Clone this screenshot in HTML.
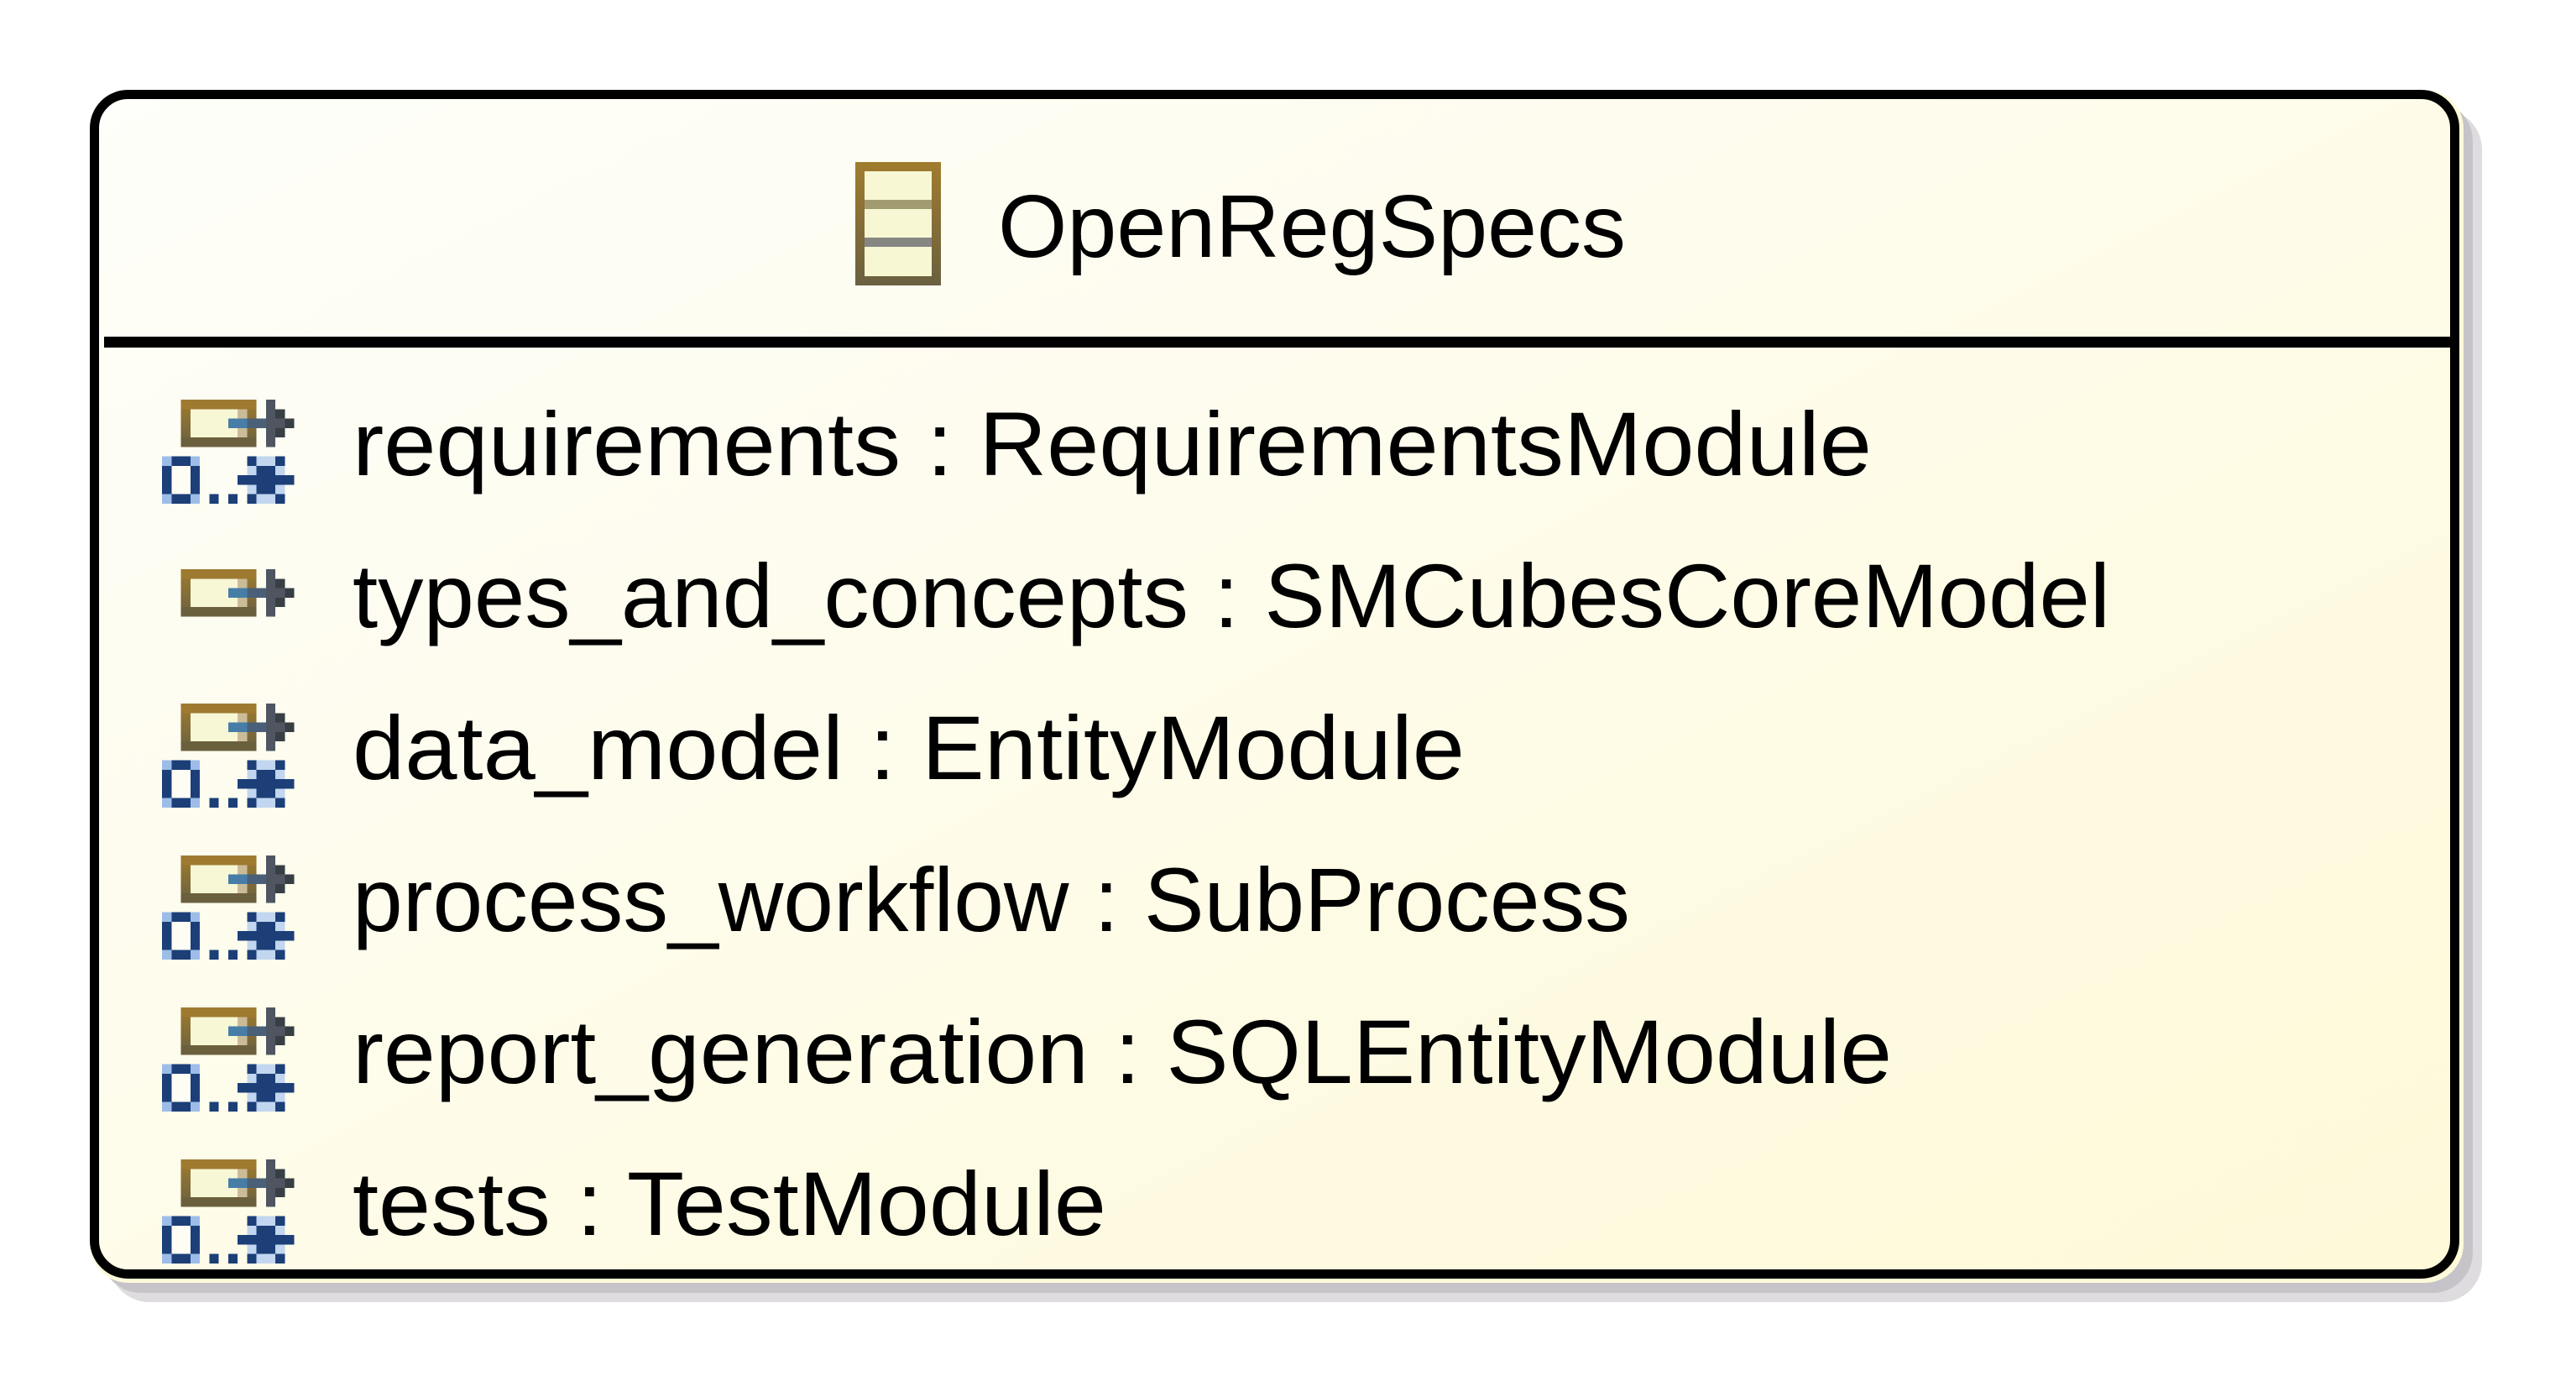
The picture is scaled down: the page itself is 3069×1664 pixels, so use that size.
<!DOCTYPE html>
<html><head><meta charset="utf-8"><style>html,body{margin:0;padding:0;background:#fff}svg{display:block}</style></head>
<body>
<svg width="3069" height="1664" viewBox="0 0 3069 1664" xmlns="http://www.w3.org/2000/svg">
<defs>
<linearGradient id="bg" x1="0" y1="0" x2="1" y2="1">
<stop offset="0" stop-color="#fefefa"/><stop offset="1" stop-color="#fef9d8"/>
</linearGradient>
<linearGradient id="gold" x1="0" y1="0" x2="0" y2="1">
<stop offset="0" stop-color="#a07c2e"/><stop offset="1" stop-color="#6a6040"/>
</linearGradient>
<g id="attr" shape-rendering="crispEdges">
<rect x="2" y="0" width="8" height="5" fill="url(#gold)"/>
<rect x="2" y="0" width="8" height="1" fill="#9e7a30"/>
<rect x="2" y="4" width="8" height="1" fill="#6b603e"/>
<rect x="3" y="1" width="6" height="3" fill="#f7f7d6"/>
<rect x="8" y="1" width="1" height="3" fill="#cbbc98"/>
<rect x="7" y="2" width="2" height="1" fill="#467ea8"/>
<rect x="9" y="2" width="2" height="1" fill="#4a6078"/>
<rect x="11" y="0" width="1" height="5" fill="#4f5561"/>
<rect x="12" y="1" width="1" height="3" fill="#373f44"/>
<rect x="12" y="2" width="1" height="1" fill="#4f5561"/>
<rect x="13" y="2" width="1" height="1" fill="#373f44"/>
</g>
<g id="mult" shape-rendering="crispEdges">
<rect x="0" y="6" width="4" height="5" fill="#1c3f78"/>
<rect x="1" y="7" width="2" height="3" fill="#fdfdf5"/>
<rect x="0" y="6" width="1" height="1" fill="#9dbde8"/><rect x="3" y="6" width="1" height="1" fill="#9dbde8"/>
<rect x="0" y="10" width="1" height="1" fill="#9dbde8"/><rect x="3" y="10" width="1" height="1" fill="#9dbde8"/>
<rect x="5" y="10" width="1" height="1" fill="#1c3f78"/><rect x="7" y="10" width="1" height="1" fill="#1c3f78"/>
<rect x="9" y="6" width="4" height="5" fill="#c2d6f0"/>
<rect x="9" y="6" width="1" height="1" fill="#1c3f78"/><rect x="12" y="6" width="1" height="1" fill="#1c3f78"/>
<rect x="9" y="10" width="1" height="1" fill="#1c3f78"/><rect x="12" y="10" width="1" height="1" fill="#1c3f78"/>
<rect x="10" y="7" width="2" height="3" fill="#1c3f78"/>
<rect x="8" y="8" width="6" height="1" fill="#1c3f78"/>
</g>
</defs>
<rect x="130" y="130" width="2827" height="1421" rx="48" fill="#dedcdf"/>
<rect x="120" y="120" width="2826" height="1420" rx="48" fill="#c6c4c9"/>
<rect x="107" y="107" width="2828" height="1421" rx="46" fill="#fdfad9"/>
<rect x="112.5" y="112.5" width="2812" height="1405" rx="40" fill="url(#bg)" stroke="#000" stroke-width="11"/>
<rect x="124" y="401" width="2800" height="13" fill="#000"/>
<g shape-rendering="crispEdges">
<rect x="1019" y="193" width="102" height="147" fill="url(#gold)"/>
<rect x="1030" y="204" width="80" height="125" fill="#f7f7d4"/>
<rect x="1030" y="238" width="80" height="11" fill="#a39b70"/>
<rect x="1030" y="283" width="80" height="11" fill="#868682"/>
</g>
<text x="1189" y="306" font-family="Liberation Sans, sans-serif" font-size="106" textLength="748" lengthAdjust="spacingAndGlyphs" fill="#000">OpenRegSpecs</text>
<g font-family="Liberation Sans, sans-serif" font-size="108" fill="#000">
<text x="420" y="566" textLength="1810" lengthAdjust="spacingAndGlyphs">requirements : RequirementsModule</text>
<text x="420" y="747" textLength="2094" lengthAdjust="spacingAndGlyphs">types_and_concepts : SMCubesCoreModel</text>
<text x="420" y="928" textLength="1325" lengthAdjust="spacingAndGlyphs">data_model : EntityModule</text>
<text x="420" y="1109" textLength="1522" lengthAdjust="spacingAndGlyphs">process_workflow : SubProcess</text>
<text x="420" y="1290" textLength="1834" lengthAdjust="spacingAndGlyphs">report_generation : SQLEntityModule</text>
<text x="420" y="1471" textLength="898" lengthAdjust="spacingAndGlyphs">tests : TestModule</text>
</g>
<g transform="translate(193,476) scale(11.25)"><use href="#attr"/><use href="#mult"/></g>
<g transform="translate(193,678) scale(11.25)"><use href="#attr"/></g>
<g transform="translate(193,838) scale(11.25)"><use href="#attr"/><use href="#mult"/></g>
<g transform="translate(193,1019) scale(11.25)"><use href="#attr"/><use href="#mult"/></g>
<g transform="translate(193,1200) scale(11.25)"><use href="#attr"/><use href="#mult"/></g>
<g transform="translate(193,1381) scale(11.25)"><use href="#attr"/><use href="#mult"/></g>
</svg>
</body></html>
